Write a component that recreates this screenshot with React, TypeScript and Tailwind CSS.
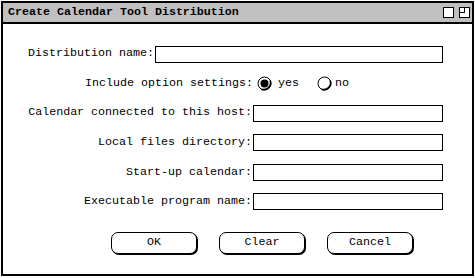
import React from "react";

const font = { fontFamily: '"Liberation Mono", "DejaVu Sans Mono", monospace' };

function Radio({ checked }: { checked: boolean }) {
  return (
    <svg width="16" height="16" viewBox="0 0 16 16" className="shrink-0">
      <circle cx="7.5" cy="7.5" r="6.5" fill="white" stroke="black" strokeWidth="1" />
      <path d="M13.2 4.5 A6.8 6.8 0 0 1 4.5 13.2" fill="none" stroke="black" strokeWidth="1.6" />
      {checked && <circle cx="7.5" cy="7.5" r="4" fill="black" />}
    </svg>
  );
}

function Field({ label, className }: { label: string; className?: string }) {
  return (
    <div className="flex items-center h-[16px]">
      <div className="w-[249px] text-right whitespace-pre">{label}</div>
      <div className="ml-[1px] w-[190px] h-[17px] border border-black bg-white" />
    </div>
  );
}

function Btn({ label }: { label: string }) {
  return (
    <div className="w-[86px] h-[22px] border border-black rounded-[7px] flex items-center justify-center shadow-[1px_1px_0_0_#000] bg-white">
      {label}
    </div>
  );
}

export default function App() {
  return (
    <div className="w-[475px] h-[278px] bg-white p-[1px] text-black text-[11.67px] leading-none" style={font}>
      <div className="w-[473px] h-[275px] border-2 border-black flex flex-col">
        <div className="h-[21px] bg-[#c0c0c0] border-b-2 border-black flex items-center pl-[5px] pr-[2px]">
          <div className="font-bold flex-1 whitespace-pre">Create Calendar Tool Distribution</div>
          <div className="flex gap-[5px]">
            <div className="w-[11px] h-[11px] border border-black bg-white" />
            <div className="w-[11px] h-[11px] border border-black bg-white relative">
              <div className="absolute left-0 top-0 w-[5px] h-[5px] border-r border-b border-black" />
            </div>
          </div>
        </div>
        <div className="flex-1 flex flex-col pt-[22px]">
          <div className="flex flex-col gap-[13.6px]">
            <div className="flex items-center h-[16px] pl-[25px]">
              <div className="whitespace-pre">Distribution name:</div>
              <div className="ml-[1px] w-[288px] h-[17px] border border-black bg-white" />
            </div>
            <div className="flex items-center h-[16px]">
              <div className="w-[250px] text-right whitespace-pre">Include option settings:</div>
              <div className="ml-[4px] flex items-center">
                <Radio checked={true} />
                <span className="ml-[5px]">yes</span>
                <span className="ml-[18px]" />
                <Radio checked={false} />
                <span className="ml-[2px]">no</span>
              </div>
            </div>
            <Field label="Calendar connected to this host:" />
            <Field label="Local files directory:" />
            <Field label="Start-up calendar:" />
            <Field label="Executable program name:" />
          </div>
          <div className="flex pl-[108px] gap-[22px] mt-[22px]">
            <Btn label="OK" />
            <Btn label="Clear" />
            <Btn label="Cancel" />
          </div>
        </div>
      </div>
    </div>
  );
}
